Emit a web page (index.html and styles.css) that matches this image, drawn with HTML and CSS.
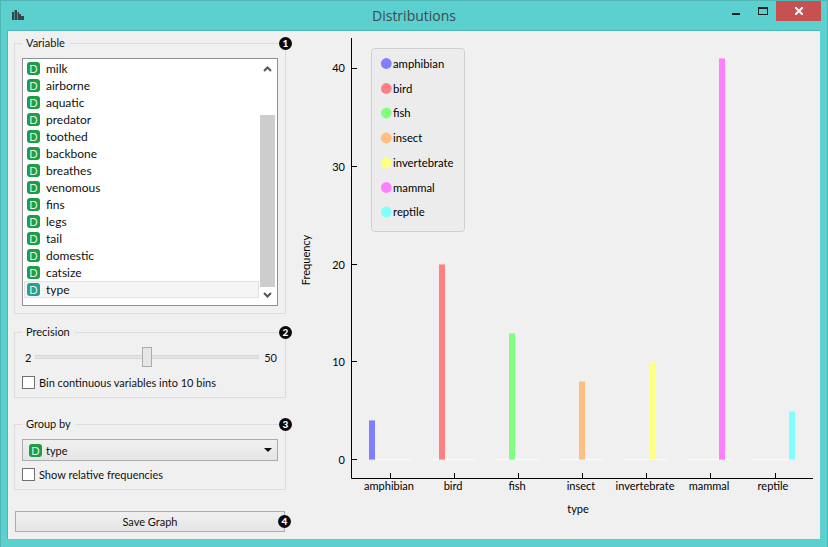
FILE: index.html
```html
<!DOCTYPE html>
<html lang="en">

<head>
  <meta charset="UTF-8">
  <title>Distributions</title>
  <link rel="stylesheet" href="styles.css">
</head>

<body>
  <div class="window">
    <div class="titlebar">
      <svg class="app-icon" width="12" height="10" viewBox="0 0 12 10">
        <path fill="#33484b" d="M0 2h2v8H0zM2.500 0H5v10H2.500zM5.500 2H7v8H5.500zM7 4h2v6H7zM9 6h3v4H9z" />
      </svg>
      <div class="title">Distributions</div>
      <div class="win-btn btn-min"><span class="min-glyph"></span></div>
      <div class="win-btn btn-max"><span class="max-glyph"></span></div>
      <div class="win-btn btn-close">
        <svg width="8" height="8" viewBox="0 0 8 8">
          <path stroke="#fff" stroke-width="2" d="M0 0l8 8M8 0L0 8" />
        </svg>
      </div>
    </div>

    <div class="content">
      <div class="sidebar">
        <fieldset class="group group-variable">
          <legend>Variable</legend>
          <span class="marker">1</span>
          <div class="listbox">
            <ul class="varlist">
              <li><i class="tag">D</i>milk</li>
              <li><i class="tag">D</i>airborne</li>
              <li><i class="tag">D</i>aquatic</li>
              <li><i class="tag">D</i>predator</li>
              <li><i class="tag">D</i>toothed</li>
              <li><i class="tag">D</i>backbone</li>
              <li><i class="tag">D</i>breathes</li>
              <li><i class="tag">D</i>venomous</li>
              <li><i class="tag">D</i>fins</li>
              <li><i class="tag">D</i>legs</li>
              <li><i class="tag">D</i>tail</li>
              <li><i class="tag">D</i>domestic</li>
              <li><i class="tag">D</i>catsize</li>
              <li class="selected"><i class="tag">D</i>type</li>
            </ul>
            <div class="scrollbar">
              <svg class="arrow" width="15" height="17" viewBox="0 0 15 17">
                <path fill="none" stroke="#555" stroke-width="2" d="M4 11l3.500-3.500L11 11" />
              </svg>
              <div class="track"><div class="thumb"></div></div>
              <svg class="arrow" width="15" height="17" viewBox="0 0 15 17">
                <path fill="none" stroke="#555" stroke-width="2" d="M4 6l3.500 3.500L11 6" />
              </svg>
            </div>
          </div>
        </fieldset>

        <fieldset class="group group-precision">
          <legend>Precision</legend>
          <span class="marker">2</span>
          <div class="slider-row">
            <span>2</span>
            <div class="slider"><div class="handle"></div></div>
            <span class="slider-max">50</span>
          </div>
          <label class="check"><i class="box"></i>Bin continuous variables into 10 bins</label>
        </fieldset>

        <fieldset class="group group-by">
          <legend>Group by</legend>
          <span class="marker">3</span>
          <div class="combo"><i class="tag">D</i>type<span class="caret"></span></div>
          <label class="check"><i class="box"></i>Show relative frequencies</label>
        </fieldset>

        <div class="save-row">
          <button class="save">Save Graph</button>
          <span class="marker">4</span>
        </div>
      </div>

      <svg class="plot" width="522" height="508" viewBox="298 31 522 508">
        <g class="baselines">
          <path d="M369 459.500h42" />
          <path d="M433 459.500h42" />
          <path d="M497 459.500h42" />
          <path d="M561 459.500h42" />
          <path d="M625 459.500h42" />
          <path d="M689 459.500h42" />
          <path d="M753 459.500h42" />
        </g>

        <rect x="369" y="420" width="6" height="40" fill="#8080ff" />
        <rect x="439" y="264" width="6" height="196" fill="#ff8080" />
        <rect x="509" y="333" width="6" height="127" fill="#80ff80" />
        <rect x="579" y="381" width="6" height="79" fill="#ffbf80" />
        <rect x="649" y="362" width="6" height="98" fill="#ffff80" />
        <rect x="719" y="58" width="6" height="402" fill="#ff80ff" />
        <rect x="789" y="411" width="6" height="49" fill="#80ffff" />

        <!-- paler row at both ends of each bar -->
        <path class="caps" d="M369 420.500h6M369 459.500h6M439 264.500h6M439 459.500h6M509 333.500h6M509 459.500h6M579 381.500h6M579 459.500h6M649 362.500h6M649 459.500h6M719 58.500h6M719 459.500h6M789 411.500h6M789 459.500h6" />

        <path class="axis" d="M351.500 38v440.500H813" />
        <path class="axis" d="M351 459.500h6M351 361.500h6M351 264.500h6M351 166.500h6M351 68.500h6" />
        <path class="axis" d="M390.500 473v5M454.500 473v5M518.500 473v5M582.500 473v5M646.500 473v5M710.500 473v5M775.500 473v5" />

        <g class="ylabels">
          <text x="345" y="464">0</text>
          <text x="345" y="366">10</text>
          <text x="345" y="269">20</text>
          <text x="345" y="171">30</text>
          <text x="345" y="72">40</text>
        </g>
        <g class="xlabels">
          <text x="389" y="490">amphibian</text>
          <text x="453" y="490">bird</text>
          <text x="517" y="490">fish</text>
          <text x="581" y="490">insect</text>
          <text x="645" y="490">invertebrate</text>
          <text x="709" y="490">mammal</text>
          <text x="773" y="490">reptile</text>
          <text x="578" y="513">type</text>
        </g>
        <text class="ytitle" transform="translate(310 260) rotate(-90)">Frequency</text>

        <rect class="legend-box" x="371.500" y="48.500" width="93" height="183" rx="3" />
        <g class="legend-items">
          <circle cx="386.300" cy="63.500" r="5.400" fill="#8080ff" /><text x="393" y="68">amphibian</text>
          <circle cx="386.300" cy="88.500" r="5.400" fill="#ff8080" /><text x="393" y="93">bird</text>
          <circle cx="386.300" cy="113" r="5.400" fill="#80ff80" /><text x="393" y="117">fish</text>
          <circle cx="386.300" cy="138" r="5.400" fill="#ffbf80" /><text x="393" y="142">insect</text>
          <circle cx="386.300" cy="163" r="5.400" fill="#ffff80" /><text x="393" y="167">invertebrate</text>
          <circle cx="386.300" cy="187.500" r="5.400" fill="#ff80ff" /><text x="393" y="192">mammal</text>
          <circle cx="386.300" cy="212" r="5.400" fill="#80ffff" /><text x="393" y="216">reptile</text>
        </g>
      </svg>
    </div>
  </div>
</body>

</html>
```

FILE: styles.css
```css
* {
  margin: 0px;
  padding: 0px;
  box-sizing: border-box;
}

html,
body {
  width: 828px;
  height: 547px;
  overflow: hidden;
}

body {
  font-family: "Lato", "Open Sans", sans-serif;
  font-size: 11px;
  color: #111;
}

.window {
  width: 828px;
  height: 547px;
  background-color: #5ccfcf;
  border: 1px solid #4fb5b5;
  border-bottom: 0;
  display: flex;
  flex-direction: column;
  padding: 0 7px 8px 6px;
}

/* title bar */
.titlebar {
  height: 29px;
  display: flex;
  align-items: flex-start;
  position: relative;
  flex-shrink: 0;
}

.app-icon {
  margin: 9px 0 0 5px;
}

.title {
  position: absolute;
  left: 1px;
  right: 0;
  top: 6px;
  text-align: center;
  font-family: "Open Sans", sans-serif;
  font-size: 14px;
  line-height: 18px;
  color: #3c4b4d;
}

.win-btn {
  width: 45px;
  height: 20px;
  display: flex;
  align-items: center;
  justify-content: center;
}

.btn-min {
  margin-left: auto;
  width: 28px;
}

.btn-max {
  width: 26px;
}

.btn-close {
  background-color: #c75050;
  margin-right: -1px;
}

.min-glyph {
  width: 8px;
  height: 2px;
  margin-top: 6px;
  background-color: #222;
}

.max-glyph {
  width: 10px;
  height: 8px;
  border: 1px solid #222;
  border-top-width: 2px;
}

/* main area */
.content {
  flex: 1;
  display: flex;
  background-color: #f0f0f0;
  border: 1px solid #4fb5b5;
  border-bottom: 0;
  border-right: 0;
  position: relative;
}

.sidebar {
  width: 290px;
  padding: 4px 0 0 6px;
  flex-shrink: 0;
}

.plot {
  flex-shrink: 0;
  font-size: 11px;
}

/* group boxes */
.group {
  position: relative;
  width: 272px;
  border: 1px solid #dcdcdc;
  padding: 0 7px;
  min-width: 0;
}

.group legend {
  padding: 0 5px 0 4px;
  line-height: 16px;
  height: 16px;
}

.group-variable {
  height: 279px;
}

.group-precision {
  height: 74px;
  margin-top: 10px;
}

.group-by {
  height: 74px;
  margin-top: 18px;
}

.marker {
  position: absolute;
  right: -7px;
  top: -14px;
  width: 13px;
  height: 13px;
  border-radius: 50%;
  background-color: #0a0a0a;
  color: #fff;
  font-size: 10px;
  font-weight: 900;
  line-height: 13px;
  text-align: center;
}

/* variable list */
.listbox {
  height: 248px;
  margin-top: 7px;
  background-color: #fff;
  border: 1px solid #8f8f97;
  padding: 1px;
  display: flex;
}

.varlist {
  flex: 1;
  list-style: none;
}

.varlist li {
  height: 17px;
  line-height: 17px;
  display: flex;
  align-items: center;
  padding-left: 3px;
  font-size: 12px;
}

.varlist .selected {
  background-color: #f5f5f5;
  border: 1px solid #e2e2e2;
  padding-left: 2px;
}

.selected .tag {
  background-color: #2c9d8f;
}

.tag {
  width: 13px;
  height: 13px;
  border-radius: 3px;
  background-color: #1f9c47;
  color: #dff5e6;
  font-style: normal;
  font-size: 11px;
  line-height: 13px;
  text-align: center;
  margin-right: 6px;
  flex-shrink: 0;
}

.scrollbar {
  width: 15px;
  margin: 0 1px;
  display: flex;
  flex-direction: column;
  flex-shrink: 0;
}

.arrow {
  flex-shrink: 0;
}

.track {
  flex: 1;
  background-color: #fff;
  padding-top: 38px;
}

.thumb {
  height: 172px;
  background-color: #cdcdcd;
}

/* precision */
.slider-row {
  display: grid;
  grid-template-columns: 10px 224px 1fr;
  align-items: center;
  height: 20px;
  margin-top: 7px;
  padding-left: 3px;
}

.slider-max {
  text-align: right;
  padding-right: 1px;
}

.slider {
  height: 4px;
  background-color: #e4e4e4;
  border: 1px solid #d8d8d8;
  position: relative;
}

.handle {
  position: absolute;
  left: 106px;
  top: -9px;
  width: 10px;
  height: 20px;
  background-color: #e6e6e6;
  border: 1px solid #acacac;
}

.check {
  display: flex;
  align-items: center;
  height: 14px;
  margin-top: 8px;
}

.box {
  width: 13px;
  height: 13px;
  background-color: #fff;
  border: 1px solid #707070;
  margin-right: 4px;
}

/* group by */
.combo {
  height: 22px;
  margin-top: 7px;
  display: flex;
  align-items: center;
  padding-left: 6px;
  background: linear-gradient(#f0f0f0, #e5e5e5);
  border: 1px solid #acacac;
}

.combo .tag {
  margin-right: 4px;
}

.caret {
  margin-left: auto;
  margin-right: 5px;
  border-left: 4px solid transparent;
  border-right: 4px solid transparent;
  border-top: 4px solid #111;
}

.group-by .check {
  margin-top: 6px;
}

/* save button */
.save-row {
  position: relative;
  width: 270px;
  margin: 21px 0 0 1px;
}

.save {
  display: block;
  width: 100%;
  height: 21px;
  font-family: inherit;
  font-size: 11px;
  color: #111;
  background: linear-gradient(#f0f0f0, #e5e5e5);
  border: 1px solid #acacac;
}

.save-row .marker {
  right: -6px;
  top: 4px;
}

/* plot */
.axis {
  fill: none;
  stroke: #000;
  stroke-width: 1;
}

.baselines path {
  stroke: #fbfbfb;
  stroke-width: 1;
}

.caps {
  stroke: rgba(255, 255, 255, .35);
  stroke-width: 1;
}

.ylabels text {
  text-anchor: end;
}

.xlabels text {
  text-anchor: middle;
}

.ytitle {
  text-anchor: middle;
}

.legend-box {
  fill: #ececec;
  stroke: #cfcfcf;
}

.legend-items {
  font-size: 11.3px;
}
```
